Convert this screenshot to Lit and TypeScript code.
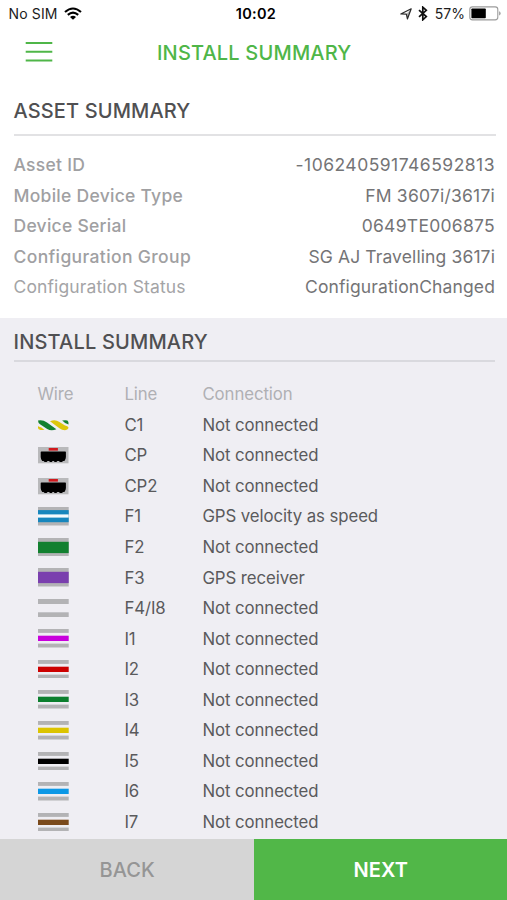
import { LitElement, html, css, svg } from "lit";
import { customElement, property } from "lit/decorators.js";

type Band = [y: number, height: number, color: string];

const GREY = "#b3b3b5";

const thin = (color: string): Band[] => [
  [0, 3.9, GREY],
  [6.7, 5.3, color],
  [14.6, 3.9, GREY],
];
const thick = (color: string): Band[] => [
  [0, 18.5, GREY],
  [3.8, 11.3, color],
];

const BANDS: Record<string, Band[]> = {
  F1: [
    [0, 18.5, GREY],
    [3.1, 12.1, "#1786bd"],
    [7.4, 3.2, "#f4fafd"],
  ],
  F2: thick("#12802f"),
  F3: thick("#7a3fae"),
  "F4/I8": [
    [0, 5, GREY],
    [13.3, 5, GREY],
  ],
  I1: thin("#c800dc"),
  I2: thin("#cc0000"),
  I3: thin("#0c7f2e"),
  I4: thin("#dcc400"),
  I5: thin("#000000"),
  I6: thin("#0c98e6"),
  I7: thin("#7a4a1c"),
};

const ROWS: [string, string][] = [
  ["C1", "Not connected"],
  ["CP", "Not connected"],
  ["CP2", "Not connected"],
  ["F1", "GPS velocity as speed"],
  ["F2", "Not connected"],
  ["F3", "GPS receiver"],
  ["F4/I8", "Not connected"],
  ["I1", "Not connected"],
  ["I2", "Not connected"],
  ["I3", "Not connected"],
  ["I4", "Not connected"],
  ["I5", "Not connected"],
  ["I6", "Not connected"],
  ["I7", "Not connected"],
];

const ASSET: [string, string, string][] = [
  ["Asset ID", "-106240591746592813", "id"],
  ["Mobile Device Type", "FM 3607i/3617i", "type"],
  ["Device Serial", "0649TE006875", "serial"],
  ["Configuration Group", "SG AJ Travelling 3617i", "group"],
  ["Configuration Status", "ConfigurationChanged", "status"],
];

@customElement("wire-icon")
class WireIcon extends LitElement {
  @property() line = "";

  static styles = css`
    :host { display: block; height: 18.5px; width: 31px; margin-left: 0.3px; }
    svg { display: block; }
  `;

  private drawing() {
    if (this.line === "C1") {
      return svg`
        <path d="M0 10.2 Q3.5 11 6.5 13.9 Q4.5 14.2 2.5 14 Q0 13.6 0 12Z" fill="#dcc60c"/>
        <path d="M0 4.6 Q4.6 3.4 9 6.6 L18.4 13.2 Q13.2 15.3 9.2 12.9 L2.4 8.6 Q0 7.4 0 4.6Z" fill="#12802f"/>
        <path d="M12 5.2 Q17.4 3.2 21.4 6 L27 9.4 Q30.5 10.2 30.5 12 Q29.8 14 27 14.2 Q24 14.2 21.4 12.2Z" fill="#dcc60c"/>
        <path d="M24.2 4.6 Q27.6 4 29.4 4.6 Q30.8 5.4 30.5 8.6 Q27 7.8 24.2 4.6Z" fill="#12802f"/>`;
    }
    if (this.line.startsWith("CP")) {
      return svg`
        <rect x="0" y="1" width="30.5" height="16.3" fill="#b9b9bb"/>
        <rect x="10.7" y="2" width="9.2" height="2.6" fill="#d0181c"/>
        <path d="M2.7 6 Q2.7 5.4 3.4 5.4 H27.2 Q27.9 5.4 27.9 6 V11 Q27.9 13 26.4 15 H25 L24 16 H21.8 L21 15 H19.4 L18.4 16 H16.6 L15.8 15 H14.6 L13.8 16 H12 L11 15 H9.6 L8.6 16 H6.6 L5.6 15 H4.2 Q2.7 13 2.7 11Z" fill="#000"/>`;
    }
    return (BANDS[this.line] ?? []).map(
      ([y, h, c]) => svg`<rect x="0" y=${y} width="30.7" height=${h} fill=${c}/>`
    );
  }

  render() {
    return html`<svg width="31" height="18.5" viewBox="0 0 31 18.5">${this.drawing()}</svg>`;
  }
}

@customElement("status-bar")
class StatusBar extends LitElement {
  static styles = css`
    :host {
      display: grid; grid-template-columns: 1fr auto 1fr; align-items: center;
      height: 27px; box-sizing: border-box; padding: 0 6px 0 8.5px;
      font-size: 14px; color: #1c1c1c;
    }
    .side { display: flex; align-items: center; }
    .right { justify-content: flex-end; }
    .left { letter-spacing: 0.15px; }
    .time { font-weight: 600; font-size: 14.5px; color: #000; letter-spacing: 0.3px; padding-left: 2.5px; }
    .wifi { margin-left: 6px; }
    .bt { margin-left: 6px; }
    .pct { margin-left: 7px; }
    .battery { margin-left: 4px; }
    svg { display: block; }
  `;

  render() {
    return html`
      <div class="side left">
        <span>No SIM</span>
        <svg class="wifi" width="18" height="13" viewBox="0 0 18 13">
          <g fill="none" stroke="#000" stroke-width="2.1">
            <path d="M1 5 Q9 -2 17 5"/>
            <path d="M3.8 7.9 Q9 3.3 14.2 7.9"/>
          </g>
          <path d="M6 9.9 Q9 7.5 12 9.9 L9 12.8Z"/>
        </svg>
      </div>
      <span class="time">10:02</span>
      <div class="side right">
        <svg width="12" height="12" viewBox="0 0 12 12">
          <path d="M0.8 6 L11.2 0.8 L7.4 11 L6.4 6.1Z" fill="none" stroke="#2b2b2b" stroke-width="1.2" stroke-linejoin="round"/>
          <path d="M11.2 0.8 L7.4 11 L6.4 6.1Z" fill="#2b2b2b" fill-opacity="0.35"/>
        </svg>
        <svg class="bt" width="10" height="15" viewBox="0 0 10 15">
          <path d="M1 4.2 L8.3 10.6 L4.8 13.8 V1.2 L8.3 4.3 L1 10.8" fill="none" stroke="#111" stroke-width="1.7"/>
        </svg>
        <span class="pct">57%</span>
        <svg class="battery" width="32" height="15" viewBox="0 0 32 15">
          <rect x="0.8" y="0.9" width="28" height="13" rx="2.6" fill="#fff" stroke="#9c9c9c" stroke-width="1.1"/>
          <rect x="2.4" y="2.5" width="14.4" height="9.8" rx="0.8"/>
          <path d="M30.1 5.2 Q31.6 5.8 31.6 7.4 Q31.6 9 30.1 9.6Z" fill="#9c9c9c"/>
        </svg>
      </div>
    `;
  }
}

@customElement("app-root")
class AppRoot extends LitElement {
  static styles = css`
    :host {
      display: flex; flex-direction: column; width: 507px; height: 900px; overflow: hidden;
      background: #fff; font-family: Inter, "Liberation Sans", sans-serif; color: #5a5a5c;
    }
    .nav {
      display: grid; grid-template-columns: 1fr auto 1fr; align-items: center;
      height: 50px; padding: 0 25px;
    }
    .nav svg { display: block; }
    .title { font-size: 20px; font-weight: 500; color: #4fb648; letter-spacing: 0.18px; padding: 1px 0 0 1.4px; }
    h2 {
      margin: 0; font-size: 20px; line-height: 24px; font-weight: 500; color: #505052;
      border-bottom: 2px solid #e2e2e4; letter-spacing: 0.18px;
    }
    .asset { height: 241px; box-sizing: border-box; padding: 22px 11.5px 0 13.5px; }
    .asset h2 { padding-bottom: 10.5px; margin-bottom: 14.5px; letter-spacing: 0.13px; }
    .pair {
      display: flex; justify-content: space-between; height: 30.55px; line-height: 30.55px;
      font-size: 17.5px; padding-right: 0.5px;
    }
    .key { color: #a0a0a2; font-weight: 500; letter-spacing: 0.27px; }
    .value { color: #747476; letter-spacing: 0.12px; }
    .id .value { letter-spacing: 0.48px; }
    .type .value { letter-spacing: 0.22px; }
    .serial .value { letter-spacing: 0.28px; }
    .group .key { letter-spacing: 0.37px; }
    .status .key { font-weight: 400; color: #a4a4a6; letter-spacing: 0.12px; }
    .install { flex: 1; min-height: 0; background: #efeef3; padding: 12px 12px 0 13.5px; }
    .install h2 { padding-bottom: 5.5px; border-color: #d9d9de; margin-bottom: 17.5px; }
    .row {
      display: grid; grid-template-columns: 87px 78px 1fr; align-items: center;
      height: 30.55px; padding-left: 24.2px; font-size: 16.8px; letter-spacing: -0.08px;
    }
    .head { color: #b0b0b4; }
    .row span { margin-left: -0.3px; }
    .actions { display: flex; height: 61px; font-size: 20px; font-weight: 500; letter-spacing: 0.1px; }
    .button { flex: 1; display: flex; align-items: center; justify-content: center; padding: 1px 0 0 1px; }
    .back { background: #d5d5d5; color: #959595; }
    .next { background: #51b748; color: #fff; font-weight: 600; }
  `;

  render() {
    return html`
      <status-bar></status-bar>
      <div class="nav">
        <svg width="28" height="22" viewBox="0 0 28 22">
          <path d="M0.7 2 H27.3 M0.7 10.8 H27.3 M0.7 19.6 H27.3" stroke="#4fb648" stroke-width="2"/>
        </svg>
        <span class="title">INSTALL SUMMARY</span>
      </div>
      <section class="asset">
        <h2>ASSET SUMMARY</h2>
        ${ASSET.map(
          ([k, v, c]) => html`<div class="pair ${c}"><span class="key">${k}</span><span class="value">${v}</span></div>`
        )}
      </section>
      <section class="install">
        <h2>INSTALL SUMMARY</h2>
        <div class="row head"><span>Wire</span><span>Line</span><span>Connection</span></div>
        ${ROWS.map(
          ([line, connection]) => html`<div class="row">
            <wire-icon .line=${line}></wire-icon><span>${line}</span><span>${connection}</span>
          </div>`
        )}
      </section>
      <div class="actions">
        <div class="button back">BACK</div>
        <div class="button next">NEXT</div>
      </div>
    `;
  }
}
